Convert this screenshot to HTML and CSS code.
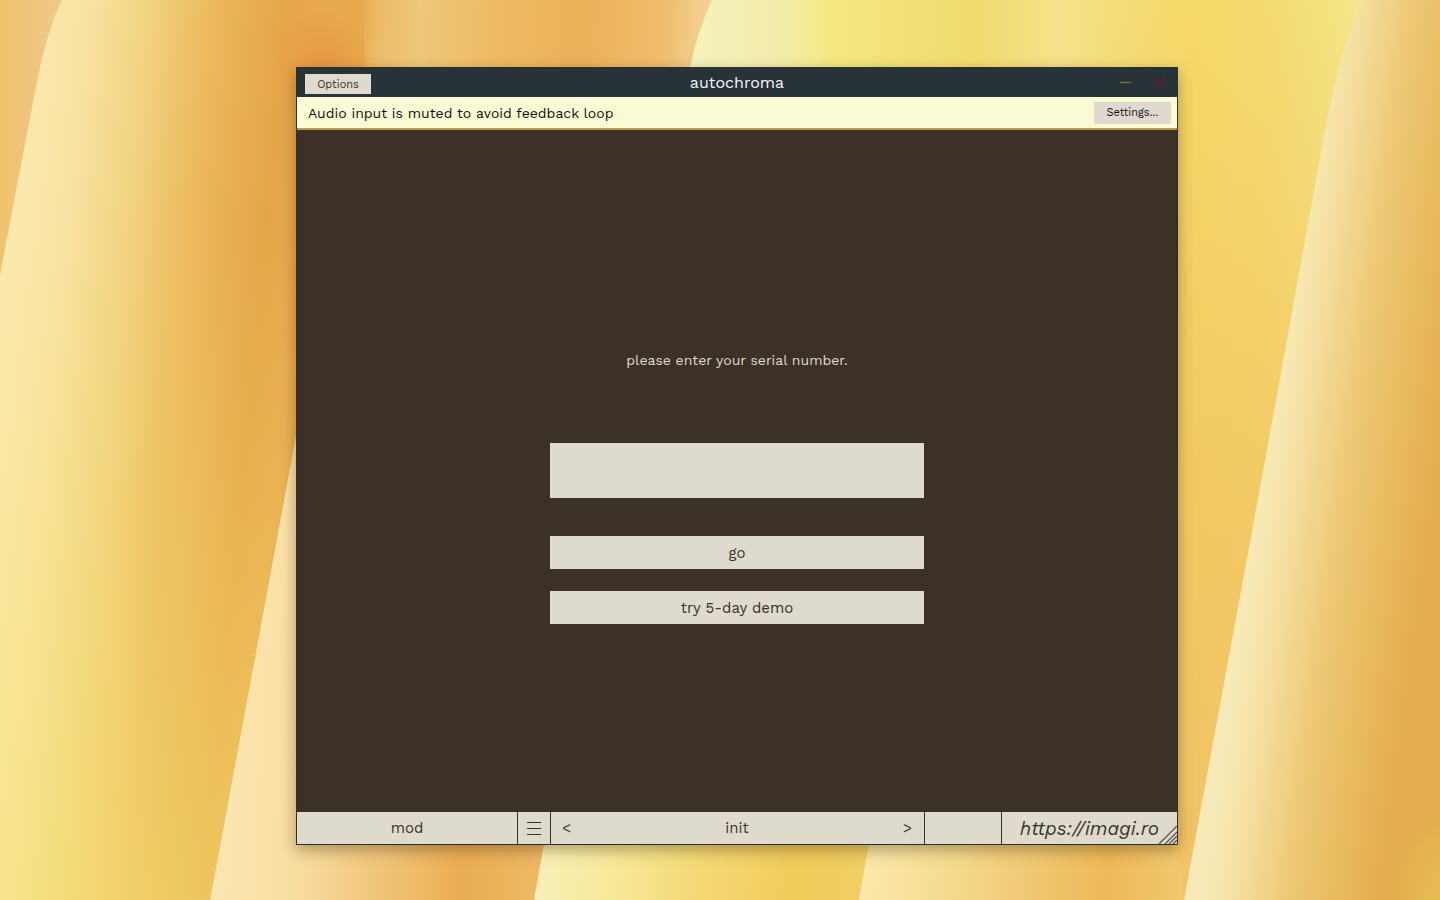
FILE: index.html
```html
<!DOCTYPE html>
<html lang="en">
<head>
<meta charset="utf-8">
<title>autochroma</title>
<link rel="stylesheet" href="styles.css">
</head>
<body>
<div class="desktop">
  <svg class="wallpaper" viewBox="0 0 1440 900" preserveAspectRatio="none" aria-hidden="true">
    <defs>
      <linearGradient id="corner" gradientUnits="userSpaceOnUse" x1="0" y1="0" x2="60" y2="0">
        <stop offset="0" stop-color="#f2c26e"/><stop offset="1" stop-color="#eec988"/>
      </linearGradient>
      <linearGradient id="left" gradientUnits="userSpaceOnUse" x1="15" y1="0" x2="315" y2="28">
        <stop offset="0" stop-color="#fbebb4"/><stop offset=".25" stop-color="#f8e2a0"/><stop offset=".42" stop-color="#f3d585"/><stop offset=".65" stop-color="#ebba5d"/><stop offset=".9" stop-color="#e5a547"/><stop offset="1" stop-color="#e8a84c"/>
      </linearGradient>
      <linearGradient id="fade" x1="0" y1="0" x2="0" y2="1">
        <stop offset=".25" stop-color="#f7e674" stop-opacity="0"/><stop offset="1" stop-color="#f7e674" stop-opacity=".5"/>
      </linearGradient>
      <linearGradient id="second" gradientUnits="userSpaceOnUse" x1="360" y1="0" x2="715" y2="20">
        <stop offset="0" stop-color="#e8a84c"/><stop offset=".05" stop-color="#ecba66"/><stop offset=".17" stop-color="#efc87a"/><stop offset=".4" stop-color="#edb962"/><stop offset=".63" stop-color="#ecb15b"/><stop offset=".85" stop-color="#efbc6b"/><stop offset="1" stop-color="#f4d59a"/>
      </linearGradient>
      <linearGradient id="yellow" gradientUnits="userSpaceOnUse" x1="690" y1="0" x2="1370" y2="0">
        <stop offset="0" stop-color="#f5f2bd"/><stop offset=".13" stop-color="#f3edab"/><stop offset=".21" stop-color="#f4e880"/><stop offset=".42" stop-color="#f2db6e"/><stop offset=".54" stop-color="#f6e28a"/><stop offset=".73" stop-color="#f5d968"/><stop offset=".86" stop-color="#f5dc70"/><stop offset="1" stop-color="#f4e88e"/>
      </linearGradient>
      <linearGradient id="warm" x1="0" y1="0" x2="0" y2="1">
        <stop offset="0" stop-color="#eda951" stop-opacity="0"/><stop offset=".5" stop-color="#eda951" stop-opacity=".32"/><stop offset="1" stop-color="#f0b468" stop-opacity=".6"/>
      </linearGradient>
      <linearGradient id="b1" gradientUnits="userSpaceOnUse" x1="215" y1="870" x2="540" y2="890">
        <stop offset="0" stop-color="#fbe6b0"/><stop offset=".25" stop-color="#f8dda0"/><stop offset=".5" stop-color="#f1c57b"/><stop offset=".75" stop-color="#ebad52"/><stop offset="1" stop-color="#edb964"/>
      </linearGradient>
      <linearGradient id="b2" gradientUnits="userSpaceOnUse" x1="535" y1="870" x2="870" y2="890">
        <stop offset="0" stop-color="#faf0b9"/><stop offset=".24" stop-color="#f7e898"/><stop offset=".5" stop-color="#f4d873"/><stop offset=".78" stop-color="#f1cb5b"/><stop offset="1" stop-color="#f1cf65"/>
      </linearGradient>
      <linearGradient id="b3" gradientUnits="userSpaceOnUse" x1="860" y1="870" x2="1190" y2="890">
        <stop offset="0" stop-color="#fbe8ac"/><stop offset=".25" stop-color="#f6dc91"/><stop offset=".5" stop-color="#f0c974"/><stop offset=".75" stop-color="#edb957"/><stop offset="1" stop-color="#f2c972"/>
      </linearGradient>
      <linearGradient id="right" gradientUnits="userSpaceOnUse" x1="1267" y1="450" x2="1440" y2="474">
        <stop offset="0" stop-color="#f8eab6"/><stop offset=".18" stop-color="#f5dfa0"/><stop offset=".45" stop-color="#eeca78"/><stop offset=".72" stop-color="#e9bb60"/><stop offset="1" stop-color="#e4ae4e"/>
      </linearGradient>
      <radialGradient id="glow"><stop offset="0" stop-color="#e79740" stop-opacity=".9"/><stop offset="1" stop-color="#e79740" stop-opacity="0"/></radialGradient>
      <radialGradient id="shine"><stop offset="0" stop-color="#e8c455" stop-opacity=".8"/><stop offset="1" stop-color="#e8c455" stop-opacity="0"/></radialGradient>
    </defs>
    <rect width="1440" height="900" fill="url(#second)"/>
    <path d="M62 0H364V67L295 437L210 900H0V0Z" fill="url(#left)"/>
    <path d="M62 0H364V67L295 437L210 900H0V0Z" fill="url(#fade)"/>
    <path d="M0 0H62Q46 32 35 92L0 275Z" fill="url(#corner)"/>
    <ellipse cx="322" cy="65" rx="48" ry="55" fill="url(#glow)"/>
    <path d="M712 0H1440V900H540L690 67Q698 30 712 0Z" fill="url(#yellow)"/>
    <path d="M1100 0H1440V900H1100Z" fill="url(#warm)"/>
    <path d="M297 430L210 900H535L560 760H297Z" fill="url(#b1)"/>
    <path d="M559 760L534 900H859L884 760Z" fill="url(#b2)"/>
    <path d="M884 760L859 900H1184L1177 845V760Z" fill="url(#b3)"/>
    <path d="M1362 0H1440V900H1184L1267 450L1325 130Q1340 50 1362 0Z" fill="url(#right)"/>
    <ellipse cx="1450" cy="900" rx="60" ry="90" fill="url(#shine)"/>
  </svg>

  <main class="window">
    <header class="titlebar">
      <button class="button options" type="button">Options</button>
      <h1 class="title">autochroma</h1>
      <div class="controls">
        <button class="control" type="button" aria-label="Minimize"><svg width="12" height="12" viewBox="0 0 12 12"><path d="M0 5.5H11" stroke="#81721f" stroke-width="1.4"/></svg></button>
        <button class="control" type="button" aria-label="Close"><svg width="12" height="12" viewBox="0 0 12 12"><path d="M1 1L11 11M11 1L1 11" stroke="#64202a" stroke-width="1.6"/></svg></button>
      </div>
    </header>
    <div class="notice">
      <span>Audio input is muted to avoid feedback loop</span>
      <button class="button settings" type="button">Settings...</button>
    </div>
    <form class="register">
      <label class="prompt" for="serial">please enter your serial number.</label>
      <input class="serial" id="serial" type="text">
      <button class="action" type="button">go</button>
      <button class="action" type="button">try 5-day demo</button>
    </form>
    <footer class="toolbar">
      <button class="cell" type="button">mod</button>
      <button class="cell" type="button" aria-label="Menu"><svg width="14" height="14" viewBox="0 0 14 14"><path d="M0 1.5H14M0 7.5H14M0 13.5H14" stroke="#3b3029"/></svg></button>
      <div class="cell preset">
        <button class="step" type="button">&lt;</button>
        <button class="step" type="button">init</button>
        <button class="step" type="button">&gt;</button>
      </div>
      <div class="cell"></div>
      <a class="cell link" href="https://imagi.ro">https://imagi.ro</a>
    </footer>
    <svg class="grip" width="18" height="18" viewBox="0 0 18 18" aria-hidden="true"><path d="M0 18L18 0M6 18L18 6M10 18L18 10M14 18L18 14" stroke="#5c5c58" stroke-width="1.4"/></svg>
  </main>
</div>
</body>
</html>
```
FILE: styles.css
```css
* { box-sizing: border-box; }

body {
  margin: 0;
  font-family: "Work Sans", Inter, "Noto Sans", sans-serif;
  color: #3b3229;
}

button, input {
  margin: 0;
  padding: 0;
  border: 0;
  border-radius: 0;
  font: inherit;
  color: inherit;
  background: none;
}

.desktop {
  position: relative;
  min-height: 100vh;
  overflow: hidden;
}

.wallpaper {
  position: absolute;
  inset: 0;
  width: 100%;
  height: 100%;
}

.window {
  position: absolute;
  inset: 67px 262px 55px 296px;
  display: flex;
  flex-direction: column;
  border: 1px solid #30302b;
  background: #3c3129;
  box-shadow: 0 5px 14px rgba(60, 45, 10, .4);
}

.titlebar {
  display: grid;
  grid-template-columns: 1fr auto 1fr;
  align-items: center;
  height: 29px;
  padding: 0 8px;
  background: #283239;
}

.button {
  font-size: 11px;
  line-height: 22px;
  background: #dfd9cf;
}

.options {
  width: 66px;
  height: 20px;
  margin-top: 2px;
}

.title {
  margin: 0;
  font-size: 16px;
  font-weight: 400;
  line-height: 20px;
  color: #f4f7f8;
}

.controls {
  display: flex;
  justify-content: flex-end;
  gap: 22px;
  padding-right: 3px;
}

.control {
  display: flex;
}

.notice {
  display: flex;
  justify-content: space-between;
  align-items: center;
  height: 33px;
  padding: 0 6px 0 11px;
  border-bottom: 2px solid #ba9c3d;
  font-size: 14px;
  color: #111;
  background: #fafbd5;
}

.settings {
  width: 77px;
  height: 22px;
}

.register {
  flex: 1;
  display: flex;
  flex-direction: column;
  align-items: center;
  justify-content: center;
  padding-top: 32px;
}

.prompt {
  margin-bottom: 73px;
  font-size: 14px;
  line-height: 20px;
  color: #dfdace;
}

.serial, .action {
  width: 42.5%;
  background: #dfdace;
}

.serial {
  height: 55px;
  margin-bottom: 38px;
  padding: 0 12px;
}

.action {
  height: 33px;
  font-size: 15px;
}

.action + .action {
  margin-top: 22px;
}

.toolbar {
  display: grid;
  grid-template-columns: 220fr 33px 374fr 77fr 176fr;
  height: 32px;
  font-size: 15px;
  background: #dfdace;
}

.cell {
  display: flex;
  align-items: center;
  justify-content: center;
}

.cell + .cell {
  border-left: 1px solid #3b3229;
}

.preset {
  justify-content: space-between;
  padding: 0 12px 0 11px;
}

.link {
  font-size: 19px;
  font-style: italic;
  color: inherit;
  text-decoration: none;
}

.grip {
  position: absolute;
  right: 0;
  bottom: 0;
}
```
